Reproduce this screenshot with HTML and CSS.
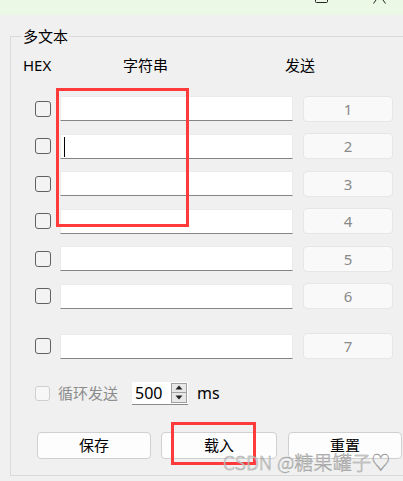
FILE: index.html
```html
<!DOCTYPE html>
<html lang="zh">
<head>
<meta charset="utf-8">
<title>多文本</title>
<link rel="stylesheet" href="styles.css">
</head>
<body>
<div class="topbar">
  <svg class="ico-min" width="13" height="4" viewBox="0 0 13 4"><path d="M0.5 0 V1.5 Q0.5 2.5 1.5 2.5 H11.5 Q12.5 2.5 12.5 1.5 V0" fill="none" stroke="#222" stroke-width="1"/></svg>
  <svg class="ico-close" width="13" height="4" viewBox="0 0 13 4"><path d="M3 0 L0.5 3.5 M10 0 L12.5 3.5" fill="none" stroke="#222" stroke-width="1"/></svg>
</div>
<div class="group">
  <span class="group-title">多文本</span>
  <div class="header">
    <span class="h-hex">HEX</span>
    <span class="h-str">字符串</span>
    <span class="h-send">发送</span>
  </div>
  <div class="rows">
    <div class="row"><span class="cb"></span><span class="edit"></span><span class="send">1</span></div>
    <div class="row"><span class="cb"></span><span class="edit"><span class="caret"></span></span><span class="send">2</span></div>
    <div class="row"><span class="cb"></span><span class="edit"></span><span class="send">3</span></div>
    <div class="row"><span class="cb"></span><span class="edit"></span><span class="send">4</span></div>
    <div class="row"><span class="cb"></span><span class="edit"></span><span class="send">5</span></div>
    <div class="row"><span class="cb"></span><span class="edit"></span><span class="send">6</span></div>
    <div class="row row-last"><span class="cb"></span><span class="edit"></span><span class="send">7</span></div>
  </div>
  <div class="loop">
    <span class="cb cb-dis"></span>
    <span class="loop-label">循环发送</span>
    <span class="spin">
      <span class="spin-val">500</span>
      <span class="spin-btns">
        <span class="spin-up"><svg width="8" height="5" viewBox="0 0 8 5"><path d="M4 0.5 L7.5 4.5 H0.5 Z" fill="#222"/></svg></span>
        <span class="spin-down"><svg width="8" height="5" viewBox="0 0 8 5"><path d="M0.5 0.5 H7.5 L4 4.5 Z" fill="#222"/></svg></span>
      </span>
    </span>
    <span class="ms">ms</span>
  </div>
  <div class="buttons">
    <span class="btn btn-save">保存</span>
    <span class="btn btn-load">载入</span>
    <span class="btn btn-reset">重置</span>
  </div>
</div>
<div class="mark mark-a"></div>
<div class="mark mark-b"></div>
<div class="watermark">CSDN @糖果罐子♡</div>
</body>
</html>
```
FILE: styles.css
```css
html, body {
  margin: 0;
  padding: 0;
}
body {
  width: 403px;
  height: 481px;
  overflow: hidden;
  background: #f0f0f0;
  font-family: "Noto Sans CJK SC", "Noto Sans", sans-serif;
  font-size: 15px;
  line-height: 16px;
  color: #000;
  position: relative;
}
.topbar {
  height: 15px;
  background: #ecf8e6;
  display: flex;
  align-items: flex-start;
}
.ico-min {
  margin-left: 315px;
  display: block;
}
.ico-close {
  margin-left: 45px;
  display: block;
}
.group {
  position: relative;
  margin: 21px 0 0 10px;
  width: 400px;
  height: 440px;
  border: 1px solid #dadada;
  border-right: none;
  box-sizing: border-box;
}
.group-title {
  position: absolute;
  left: 11px;
  top: -9px;
  padding: 0 1px;
  background: #f0f0f0;
  line-height: 16px;
}
.header {
  display: flex;
  margin-top: 20px;
  padding-left: 12px;
  height: 16px;
}
.h-hex {
  width: 100px;
  font-family: "Noto Sans", sans-serif;
}
.h-str {
  width: 162px;
}
.rows {
  margin-top: 23px;
  padding-left: 24px;
  display: flex;
  flex-direction: column;
  gap: 12.6px;
}
.row {
  display: flex;
  align-items: center;
  height: 25px;
}
.row-last {
  margin-top: 12px;
}
.cb {
  width: 16px;
  height: 16px;
  box-sizing: border-box;
  border: 1px solid #616161;
  border-radius: 3px;
  background: #f3f3f3;
  flex: none;
}
.edit {
  position: relative;
  margin-left: 9px;
  width: 233px;
  height: 25px;
  box-sizing: border-box;
  background: #fff;
  border: 1px solid #ebebeb;
  border-bottom: 1px solid #858585;
  flex: none;
}
.caret {
  position: absolute;
  left: 3px;
  top: 2px;
  width: 1px;
  height: 20px;
  background: #000;
}
.send {
  margin-left: 10px;
  width: 90px;
  height: 26px;
  box-sizing: border-box;
  background: #f9f9f9;
  border: 1px solid #e6e6e6;
  border-radius: 4px;
  color: #8a8a8a;
  font-family: "Noto Sans", sans-serif;
  display: flex;
  align-items: center;
  justify-content: center;
  flex: none;
}
.loop {
  display: flex;
  align-items: center;
  height: 23px;
  margin-top: 23px;
  padding-left: 24px;
}
.cb-dis {
  width: 15px;
  height: 15px;
  border-color: #cfcfcf;
  background: #f7f7f7;
}
.loop-label {
  margin-left: 8px;
  color: #8c8c8c;
}
.spin {
  margin-left: 14px;
  width: 56px;
  height: 23px;
  box-sizing: border-box;
  background: #fff;
  border-bottom: 1px solid #8a8a8a;
  display: flex;
  align-items: center;
  justify-content: space-between;
  padding: 0 1px 0 3px;
}
.spin-val {
  font-family: "Noto Sans", sans-serif;
  font-size: 16px;
}
.spin-btns {
  width: 16px;
  height: 20px;
  box-sizing: border-box;
  border: 1px solid #a0a0a0;
  background: #e8e8e8;
  display: flex;
  flex-direction: column;
}
.spin-up, .spin-down {
  flex: 1;
  display: flex;
  align-items: center;
  justify-content: center;
}
.spin-up {
  border-bottom: 1px solid #a0a0a0;
}
.spin-up svg, .spin-down svg {
  display: block;
}
.ms {
  margin-left: 9px;
  font-family: "Noto Sans", sans-serif;
  font-size: 16px;
}
.buttons {
  display: flex;
  margin-top: 27px;
  padding-left: 26px;
}
.btn {
  height: 27px;
  box-sizing: border-box;
  background: #fdfdfd;
  border: 1px solid #d0d0d0;
  border-radius: 4px;
  display: flex;
  align-items: center;
  justify-content: center;
}
.btn-save { width: 114px; }
.btn-load { width: 116px; margin-left: 10px; }
.btn-reset { width: 114px; margin-left: 11px; }
.mark {
  position: absolute;
  border: 3.5px solid #ff3a3a;
  box-sizing: border-box;
}
.mark-a {
  left: 56px;
  top: 88px;
  width: 133px;
  height: 139px;
}
.mark-b {
  left: 171px;
  top: 422px;
  width: 85px;
  height: 43px;
}
.watermark {
  position: absolute;
  left: 223px;
  top: 452px;
  font-family: "Noto Sans CJK SC", "Liberation Sans", sans-serif;
  font-weight: 300;
  font-size: 19px;
  line-height: 20px;
  letter-spacing: 0.2px;
  color: rgba(250, 250, 250, 0.75);
  -webkit-text-stroke: 0.5px #9a9a9a;
  white-space: nowrap;
}
```
